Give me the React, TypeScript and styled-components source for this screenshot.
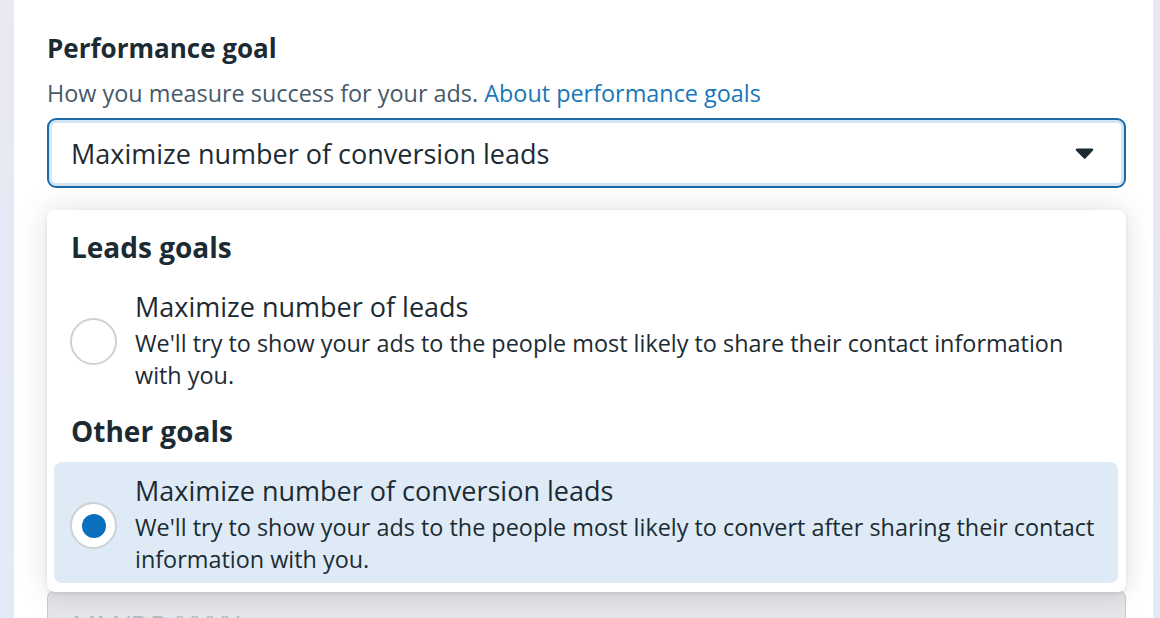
import React from 'react';
import styled, { createGlobalStyle } from 'styled-components';

const GlobalStyle = createGlobalStyle`
  html, body {
    margin: 0;
    padding: 0;
    height: 100%;
    overflow: hidden;
  }
  body {
    background: linear-gradient(180deg, #e9e8f4 0%, #e1ebf6 100%);
    font-family: "Open Sans", "Noto Sans", Arial, sans-serif;
    color: #1c2b33;
  }
`;

const Page = styled.div`
  display: flex;
  height: 618px;
  padding: 0 7px 0 14px;
`;

const Card = styled.main`
  flex: 1;
  background: #ffffff;
  padding: 32px 27px 0 33px;
  overflow: hidden;
`;

const Heading = styled.h2`
  margin: 0 0 14px;
  font-size: 26px;
  font-weight: 700;
  line-height: 32px;
  color: #1c2b33;
`;

const Subtitle = styled.p`
  margin: 0 0 10px;
  font-size: 23.4px;
  line-height: 30px;
  color: #465a69;
`;

const Link = styled.a`
  color: #1877b9;
  text-decoration: none;
`;

const SelectWrap = styled.div`
  position: relative;
`;

const Select = styled.div`
  box-sizing: border-box;
  height: 70px;
  display: flex;
  align-items: center;
  justify-content: space-between;
  padding: 0 30px 0 22px;
  border: 2px solid #1a6aa8;
  border-radius: 9px;
  box-shadow: inset 0 0 0 3px #d3e5f4;
  background: #fff;
  font-size: 27px;
  color: #1c2b33;
`;

const Popover = styled.div`
  position: absolute;
  top: 92px;
  left: 0;
  right: 0;
  z-index: 2;
  box-sizing: border-box;
  padding: 21px 8px 9px 7px;
  background: #fff;
  border-radius: 8px;
  box-shadow: 0 0 30px rgba(0, 0, 0, 0.13), 0 2px 4px rgba(0, 0, 0, 0.08);
`;

const GroupLabel = styled.div<{ $spaced?: boolean }>`
  margin: ${({ $spaced }) => ($spaced ? '16px' : '0')} 0 15px;
  padding-left: 17px;
  font-size: 28px;
  font-weight: 700;
  line-height: 32px;
  color: #1c2b33;
`;

const Option = styled.div<{ $selected?: boolean }>`
  display: flex;
  align-items: center;
  gap: 18px;
  padding: 14px 16px 8px;
  border-radius: 8px;
  background: ${({ $selected }) => ($selected ? '#deebf6' : 'transparent')};
`;

const Radio = styled.span`
  box-sizing: border-box;
  flex-shrink: 0;
  width: 47px;
  height: 47px;
  border-radius: 50%;
  border: 2px solid #cdd1d6;
  background: #fff;
  display: flex;
  align-items: center;
  justify-content: center;
`;

const RadioDot = styled.span`
  width: 24px;
  height: 24px;
  border-radius: 50%;
  background: #0a6fbd;
`;

const OptionText = styled.div`
  flex: 1;
`;

const OptionTitle = styled.div`
  font-size: 27px;
  line-height: 30px;
  color: #1c2b33;
`;

const OptionDesc = styled.div`
  margin-top: 5px;
  font-size: 23.4px;
  line-height: 32px;
  color: #1c2b33;
`;

const DisabledInput = styled.div`
  box-sizing: border-box;
  height: 70px;
  margin-top: 402px;
  display: flex;
  align-items: center;
  padding: 0 24px;
  border: 1.5px solid #c5c8cc;
  border-radius: 8px;
  background: linear-gradient(180deg, #e2e3e6 0%, #ebecee 100%);
  font-size: 27px;
  color: #b9bdc2;
`;

const Caret = () => (
  <svg width="19" height="11" viewBox="0 0 19 11">
    <path
      d="M2 0.5h15a1.3 1.3 0 0 1 1 2.1l-7.3 7.6a1.4 1.4 0 0 1-2 0L1 2.6A1.3 1.3 0 0 1 2 0.5z"
      fill="#1c2b33"
    />
  </svg>
);

const groups = [
  {
    label: 'Leads goals',
    options: [
      {
        title: 'Maximize number of leads',
        desc: "We'll try to show your ads to the people most likely to share their contact information with you.",
        selected: false,
      },
    ],
  },
  {
    label: 'Other goals',
    options: [
      {
        title: 'Maximize number of conversion leads',
        desc: "We'll try to show your ads to the people most likely to convert after sharing their contact information with you.",
        selected: true,
      },
    ],
  },
];

export default function App() {
  return (
    <>
      <GlobalStyle />
      <Page>
        <Card>
          <Heading>Performance goal</Heading>
          <Subtitle>
            How you measure success for your ads. <Link href="#">About performance goals</Link>
          </Subtitle>
          <SelectWrap>
            <Select>
              <span>Maximize number of conversion leads</span>
              <Caret />
            </Select>
            <Popover>
              {groups.map((group, i) => (
                <div key={group.label}>
                  <GroupLabel $spaced={i > 0}>{group.label}</GroupLabel>
                  {group.options.map((opt) => (
                    <Option key={opt.title} $selected={opt.selected}>
                      <Radio>{opt.selected && <RadioDot />}</Radio>
                      <OptionText>
                        <OptionTitle>{opt.title}</OptionTitle>
                        <OptionDesc>{opt.desc}</OptionDesc>
                      </OptionText>
                    </Option>
                  ))}
                </div>
              ))}
            </Popover>
          </SelectWrap>
          <DisabledInput>MM/DD/YYYY</DisabledInput>
        </Card>
      </Page>
    </>
  );
}
